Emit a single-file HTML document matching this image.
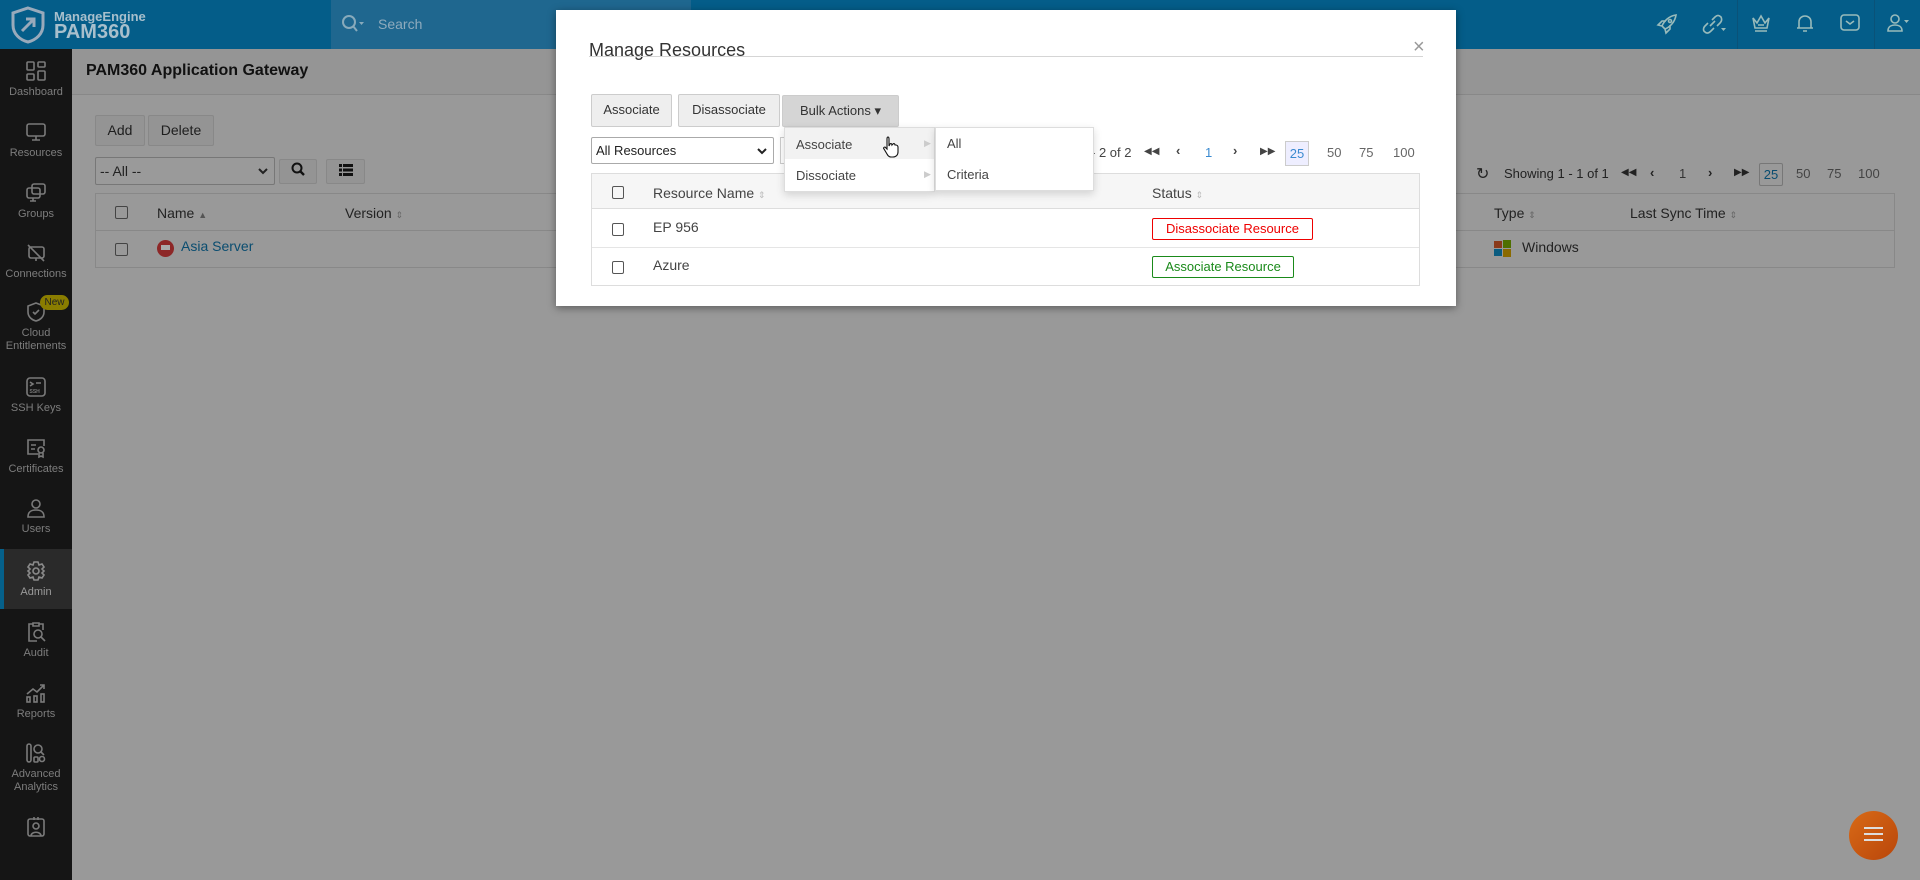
<!DOCTYPE html>
<html><head><meta charset="utf-8"><style>
*{box-sizing:border-box;margin:0;padding:0}
body{width:1920px;height:880px;overflow:hidden;background:#999;font-family:"Liberation Sans",sans-serif;font-size:14px;color:#1a1a1a;position:relative}
.a{position:absolute}
.hdr{left:0;top:0;width:1920px;height:49px;background:#045d89}
.srch{left:331px;top:0;width:360px;height:49px;background:#1f678f}
.side{left:0;top:49px;width:72px;height:831px;background:#151515}
.si{position:absolute;left:0;width:72px;text-align:center;color:#7d7d7d;font-size:11px;line-height:13px}
.si svg{display:block;margin:0 auto 4px}
.btn{position:absolute;border:1px solid #888;background:#949494;border-radius:2px;text-align:center;line-height:28px;color:#1e1e1e}
.cb{position:absolute;width:13px;height:13px;border:1px solid #444;border-radius:2px}
.modal{left:556px;top:10px;width:900px;height:296px;background:#fff;box-shadow:0 2px 8px rgba(0,0,0,.4)}
.m{position:absolute}
.mb{position:absolute;border:1px solid #ccc;background:#eee;border-radius:2px;text-align:center;line-height:30px;color:#333;font-size:13px}
.pg{position:absolute;font-size:13px;color:#666}
</style></head><body>
<div class="a hdr"></div>
<div class="a srch"></div>
<svg class="a" style="left:10px;top:6px" width="36" height="38" viewBox="0 0 36 38"><path d="M18 2 L33 7 V19 C33 28 26 34 18 36 C10 34 3 28 3 19 V7 Z" fill="none" stroke="#9ab" stroke-width="3"/><path d="M12 25 L24 13 M16 13 H24 V21" fill="none" stroke="#9ab" stroke-width="3"/></svg>
<div class="a" style="left:54px;top:9px;color:#a8bfcc;font-size:13px;font-weight:bold">ManageEngine</div>
<div class="a" style="left:54px;top:21px;color:#a8bfcc;font-size:20px;font-weight:bold">PAM360</div>
<svg class="a" style="left:341px;top:13px" width="24" height="22" viewBox="0 0 24 22"><circle cx="8" cy="9" r="6" fill="none" stroke="#8ab" stroke-width="2"/><path d="M12 13 L16 18" stroke="#8ab" stroke-width="2"/><path d="M18 9 h5 l-2.5 3z" fill="#8ab"/></svg>
<div class="a" style="left:378px;top:16px;color:#8fabbd;font-size:14px">Search</div>
<svg class="a" style="left:1656px;top:13px" width="22" height="22" viewBox="0 0 22 22" fill="none" stroke="#9bb" stroke-width="1.6"><path d="M20 2 C13 3 8 8 6 13 L9 16 C14 14 19 9 20 2Z M6 13 L2 12 L6 8 H10 M9 16 L10 20 L14 16 V12"/><circle cx="14" cy="8" r="1.5"/></svg>
<svg class="a" style="left:1701px;top:13px" width="26" height="22" viewBox="0 0 26 22" fill="none" stroke="#9bb" stroke-width="1.6"><path d="M9 13 L14 8 M7 10 L4 13 C2 15 2 18 4 19 C6 21 8 20 10 18 L13 15 M11 7 L14 4 C16 2 18 2 20 4 C21 6 21 8 19 10 L16 13"/><path d="M20 15 h5 l-2.5 3z" fill="#9bb" stroke="none"/></svg>
<div class="a" style="left:1737px;top:0;width:1px;height:49px;background:#0a5278"></div>
<svg class="a" style="left:1750px;top:12px" width="22" height="22" viewBox="0 0 22 22" fill="none" stroke="#9bb" stroke-width="1.6"><path d="M3 6 L7 11 L11 4 L15 11 L19 6 L17 16 H5 Z M5 19 H17 M8 13 H14"/></svg>
<svg class="a" style="left:1794px;top:12px" width="22" height="22" viewBox="0 0 22 22" fill="none" stroke="#9bb" stroke-width="1.6"><path d="M5 16 V10 C5 6 8 4 11 4 C14 4 17 6 17 10 V16 H5 Z M3 16 H19 M9 19 H13"/></svg>
<svg class="a" style="left:1839px;top:13px" width="22" height="20" viewBox="0 0 22 20" fill="none" stroke="#9bb" stroke-width="1.6"><rect x="2" y="2" width="18" height="15" rx="3"/><path d="M7 8 L11 11 L15 8"/></svg>
<div class="a" style="left:1874px;top:0;width:1px;height:49px;background:#0a5278"></div>
<svg class="a" style="left:1885px;top:12px" width="26" height="22" viewBox="0 0 26 22" fill="none" stroke="#9bb" stroke-width="1.6"><circle cx="10" cy="7" r="4"/><path d="M3 19 C3 14 7 13 10 13 C13 13 17 14 17 19 Z"/><path d="M19 8 h5 l-2.5 3z" fill="#9bb" stroke="none"/></svg>

<div class="a side"></div>
<div class="a" style="left:0;top:549px;width:72px;height:60px;background:#2a2a2a"></div>
<div class="a" style="left:0;top:549px;width:4px;height:60px;background:#05608a"></div>
<div class="si" style="top:60px"><svg width="22" height="22" viewBox="0 0 22 22" fill="none" stroke="#7a7a7a" stroke-width="1.6"><rect x="2" y="2" width="7" height="8" rx="1"/><rect x="13" y="2" width="7" height="5" rx="1"/><rect x="2" y="14" width="7" height="6" rx="1"/><rect x="13" y="11" width="7" height="9" rx="1"/></svg>Dashboard</div>
<div class="si" style="top:121px"><svg width="22" height="22" viewBox="0 0 22 22" fill="none" stroke="#7a7a7a" stroke-width="1.6"><rect x="2" y="3" width="18" height="12" rx="2"/><path d="M11 15 V19 M7 19 H15"/></svg>Resources</div>
<div class="si" style="top:182px"><svg width="22" height="22" viewBox="0 0 22 22" fill="none" stroke="#7a7a7a" stroke-width="1.6"><rect x="7" y="2" width="13" height="10" rx="2"/><rect x="2" y="6" width="13" height="10" rx="2"/><path d="M8 16 V19 M5 19 H11"/></svg>Groups</div>
<div class="si" style="top:242px"><svg width="22" height="22" viewBox="0 0 22 22" fill="none" stroke="#7a7a7a" stroke-width="1.6"><rect x="4" y="5" width="15" height="11" rx="2"/><path d="M3 3 L19 19 M11 16 V19"/></svg>Connections</div>
<div class="si" style="top:301px"><svg width="22" height="22" viewBox="0 0 22 22" fill="none" stroke="#7a7a7a" stroke-width="1.6"><path d="M11 2 L19 5 V11 C19 16 15 19 11 20 C7 19 3 16 3 11 V5 Z M8 11 L10 13 L14 9"/></svg>Cloud<br>Entitlements</div>
<div class="a" style="left:40px;top:295px;width:29px;height:15px;border-radius:8px;background:#8a7d00;color:#222;font-size:10px;text-align:center;line-height:15px">New</div>
<div class="si" style="top:376px"><svg width="22" height="22" viewBox="0 0 22 22" fill="none" stroke="#7a7a7a" stroke-width="1.6"><rect x="2" y="2" width="18" height="18" rx="3"/><path d="M5 6 L8 8 L5 10 M11 7 H16"/><text x="4.5" y="17" font-size="5" fill="#7a7a7a" stroke="none" font-family="Liberation Sans" font-weight="bold">SSH</text></svg>SSH Keys</div>
<div class="si" style="top:437px"><svg width="22" height="22" viewBox="0 0 22 22" fill="none" stroke="#7a7a7a" stroke-width="1.6"><path d="M13 17 H3 V3 H19 V9 M6 8 H11 M6 12 H10"/><circle cx="16" cy="13" r="3"/><path d="M14 16 V20 L16 19 L18 20 V16"/></svg>Certificates</div>
<div class="si" style="top:497px"><svg width="22" height="22" viewBox="0 0 22 22" fill="none" stroke="#7a7a7a" stroke-width="1.6"><circle cx="11" cy="7" r="4"/><path d="M3 20 C3 14 7 13 11 13 C15 13 19 14 19 20 Z"/></svg>Users</div>
<div class="si" style="top:560px;color:#9a9a9a"><svg width="22" height="22" viewBox="0 0 22 22" fill="none" stroke="#8a8a8a" stroke-width="1.6"><circle cx="11" cy="11" r="3"/><path d="M9 2 H13 L14 5 L17 4 L19 7 L17 9 L19 11 L17 13 L19 15 L17 18 L14 17 L13 20 H9 L8 17 L5 18 L3 15 L5 13 L3 11 L5 9 L3 7 L5 4 L8 5 Z"/></svg>Admin</div>
<div class="si" style="top:621px"><svg width="22" height="22" viewBox="0 0 22 22" fill="none" stroke="#7a7a7a" stroke-width="1.6"><path d="M8 3 H4 V20 H12 M14 3 H18 V9 M8 2 H14 V5 H8 Z"/><circle cx="13" cy="13" r="4"/><path d="M16 16 L20 20"/></svg>Audit</div>
<div class="si" style="top:682px"><svg width="22" height="22" viewBox="0 0 22 22" fill="none" stroke="#7a7a7a" stroke-width="1.6"><path d="M2 12 L8 7 L12 10 L19 3 M15 3 H19 V7"/><rect x="2" y="15" width="3" height="5"/><rect x="9" y="14" width="3" height="6"/><rect x="16" y="12" width="3" height="8"/></svg>Reports</div>
<div class="si" style="top:742px"><svg width="22" height="22" viewBox="0 0 22 22" fill="none" stroke="#7a7a7a" stroke-width="1.6"><rect x="2" y="2" width="4" height="18" rx="2"/><circle cx="13" cy="7" r="4"/><path d="M16 10 L19 13"/><rect x="9" y="15" width="4" height="5" rx="1"/><circle cx="17" cy="17" r="2.5"/></svg>Advanced<br>Analytics</div>
<div class="si" style="top:816px"><svg width="22" height="22" viewBox="0 0 22 22" fill="none" stroke="#7a7a7a" stroke-width="1.6"><rect x="3" y="3" width="16" height="17" rx="2"/><circle cx="11" cy="10" r="3"/><path d="M6 20 C6 15 16 15 16 20 M9 1 V4 M13 1 V4"/></svg></div>

<div class="a" style="left:72px;top:49px;width:1848px;height:46px;background:#959595;border-bottom:1px solid #888"></div>
<div class="a" style="left:86px;top:62px;font-size:16px;font-weight:bold;color:#111">PAM360 Application Gateway</div>
<div class="btn" style="left:95px;top:115px;width:50px;height:31px">Add</div>
<div class="btn" style="left:148px;top:115px;width:66px;height:31px">Delete</div>
<div class="a" style="left:95px;top:157px;width:180px;height:28px;border:1px solid #777;border-radius:2px;background:#9a9a9a;line-height:26px;padding-left:4px;color:#222">-- All --<svg style="position:absolute;right:6px;top:10px" width="10" height="7" viewBox="0 0 10 7"><path d="M1 1 L5 5 L9 1" fill="none" stroke="#222" stroke-width="2"/></svg></div>
<div class="btn" style="left:279px;top:159px;width:38px;height:25px;line-height:23px"><svg width="14" height="14" viewBox="0 0 14 14"><circle cx="6" cy="6" r="4.5" fill="none" stroke="#111" stroke-width="2"/><path d="M9 9 L13 13" stroke="#111" stroke-width="2.4"/></svg></div>
<div class="btn" style="left:326px;top:159px;width:39px;height:25px;line-height:23px"><svg width="14" height="12" viewBox="0 0 14 12" fill="#111"><rect x="0" y="0" width="3" height="3"/><rect x="4" y="0" width="10" height="3"/><rect x="0" y="4.5" width="3" height="3"/><rect x="4" y="4.5" width="10" height="3"/><rect x="0" y="9" width="3" height="3"/><rect x="4" y="9" width="10" height="3"/></svg></div>
<div class="a" style="left:1476px;top:164px;font-size:16px;color:#222">&#8635;</div>
<div class="a" style="left:1504px;top:166px;color:#222;font-size:13px">Showing 1 - 1 of 1</div>
<div class="a" style="left:1621px;top:167px;color:#222;font-size:10px">&#9664;&#9664;</div>
<div class="pg" style="left:1650px;top:165px;color:#222;font-weight:bold">&lsaquo;</div>
<div class="pg" style="left:1679px;top:166px;color:#333">1</div>
<div class="pg" style="left:1708px;top:165px;color:#222;font-weight:bold">&rsaquo;</div>
<div class="a" style="left:1734px;top:167px;color:#222;font-size:10px">&#9654;&#9654;</div>
<div class="a" style="left:1759px;top:163px;width:24px;height:23px;border:1px solid #777;border-radius:2px;text-align:center;line-height:21px;color:#0a4d70;font-size:13px">25</div>
<div class="pg" style="left:1796px;top:166px;color:#444">50</div>
<div class="pg" style="left:1827px;top:166px;color:#444">75</div>
<div class="pg" style="left:1858px;top:166px;color:#444">100</div>
<div class="a" style="left:95px;top:193px;width:1800px;height:75px;border:1px solid #888"></div>
<div class="a" style="left:95px;top:230px;width:1800px;height:1px;background:#888"></div>
<div class="cb" style="left:115px;top:206px"></div>
<div class="cb" style="left:115px;top:243px"></div>
<div class="a" style="left:157px;top:205px;color:#222">Name <span style="color:#555;font-size:9px">&#9650;</span></div>
<div class="a" style="left:345px;top:205px;color:#222">Version <span style="color:#666;font-size:9px">&#8661;</span></div>
<div class="a" style="left:1494px;top:205px;color:#222">Type <span style="color:#666;font-size:9px">&#8661;</span></div>
<div class="a" style="left:1630px;top:205px;color:#222">Last Sync Time <span style="color:#666;font-size:9px">&#8661;</span></div>
<div class="a" style="left:157px;top:240px;width:17px;height:17px;border-radius:50%;background:#8d2727"></div>
<div class="a" style="left:161px;top:245px;width:9px;height:5px;background:#aaa"></div>
<div class="a" style="left:181px;top:238px;color:#0a4d70">Asia Server</div>
<svg class="a" style="left:1494px;top:240px" width="17" height="17" viewBox="0 0 17 17"><rect x="0" y="1" width="8" height="7" fill="#8a3a1a"/><rect x="9" y="0" width="8" height="8" fill="#4f6f00"/><rect x="0" y="9" width="8" height="7" fill="#0a5c80"/><rect x="9" y="9" width="8" height="8" fill="#8a6a00"/></svg>
<div class="a" style="left:1522px;top:239px;color:#222">Windows</div>
<div class="a" style="left:1849px;top:811px;width:49px;height:49px;border-radius:50%;background:linear-gradient(135deg,#d86a17,#b9460a)"></div>
<div class="a" style="left:1864px;top:827px;width:19px;height:2px;background:#ddd;box-shadow:0 6px 0 #ddd,0 12px 0 #ddd"></div>

<div class="a modal">
<div class="m" style="left:33px;top:30px;font-size:18px;color:#333">Manage Resources</div>
<div class="m" style="left:857px;top:26px;font-size:20px;color:#999">&times;</div>
<div class="m" style="left:33px;top:46px;width:834px;height:1px;background:#d5d5d5"></div>
<div class="mb" style="left:35px;top:84px;width:81px;height:33px">Associate</div>
<div class="mb" style="left:122px;top:84px;width:102px;height:33px">Disassociate</div>
<div class="mb" style="left:226px;top:85px;width:117px;height:32px;background:#d5d5d5;border-color:#ccc">Bulk Actions &#9662;</div>
<div class="m" style="left:35px;top:127px;width:183px;height:27px;border:1px solid #aaa;border-radius:2px;font-size:13px;line-height:25px;padding-left:4px;color:#222">All Resources<svg style="position:absolute;right:6px;top:10px" width="10" height="7" viewBox="0 0 10 7"><path d="M1 1 L5 5 L9 1" fill="none" stroke="#222" stroke-width="2"/></svg></div>
<div class="m" style="left:224px;top:127px;width:10px;height:27px;border:1px solid #ccc;border-right:none"></div>
<div class="m" style="left:535px;top:135px;font-size:13px;color:#444">- 2 of 2</div>
<div class="pg" style="left:588px;top:136px;color:#444;font-size:10px">&#9664;&#9664;</div>
<div class="pg" style="left:620px;top:133px;color:#444;font-weight:bold">&lsaquo;</div>
<div class="pg" style="left:649px;top:135px;color:#3a8ad0">1</div>
<div class="pg" style="left:677px;top:133px;color:#444;font-weight:bold">&rsaquo;</div>
<div class="pg" style="left:704px;top:136px;color:#444;font-size:10px">&#9654;&#9654;</div>
<div class="m" style="left:729px;top:131px;width:24px;height:25px;border:1px solid #ccc;background:#eef;text-align:center;line-height:23px;color:#3a8ad0;font-size:13px">25</div>
<div class="pg" style="left:771px;top:135px">50</div>
<div class="pg" style="left:803px;top:135px">75</div>
<div class="pg" style="left:837px;top:135px">100</div>
<div class="m" style="left:35px;top:163px;width:829px;height:113px;border:1px solid #ddd"></div>
<div class="m" style="left:36px;top:164px;width:827px;height:35px;background:#f6f6f6;border-bottom:1px solid #ddd"></div>
<div class="m" style="left:36px;top:237px;width:827px;height:1px;background:#e5e5e5"></div>
<div class="cb" style="left:56px;top:176px;border-color:#555;width:12px;height:13px"></div>
<div class="cb" style="left:56px;top:213px;border-color:#555;width:12px;height:13px"></div>
<div class="cb" style="left:56px;top:251px;border-color:#555;width:12px;height:13px"></div>
<div class="m" style="left:97px;top:175px;color:#444;font-size:14px">Resource Name <span style="color:#bbb;font-size:9px">&#8661;</span></div>
<div class="m" style="left:596px;top:175px;color:#444;font-size:14px">Status <span style="color:#bbb;font-size:9px">&#8661;</span></div>
<div class="m" style="left:97px;top:209px;color:#444">EP 956</div>
<div class="m" style="left:97px;top:247px;color:#444">Azure</div>
<div class="m" style="left:596px;top:208px;width:161px;height:22px;border:1px solid #e00;border-radius:2px;color:#e00;font-size:13px;text-align:center;line-height:20px">Disassociate Resource</div>
<div class="m" style="left:596px;top:246px;width:142px;height:22px;border:1px solid #1a8a1a;border-radius:2px;color:#1a8a1a;font-size:13px;text-align:center;line-height:20px">Associate Resource</div>
<div class="m" style="left:228px;top:117px;width:151px;height:65px;background:#fff;border:1px solid #ddd;box-shadow:0 3px 8px rgba(0,0,0,.15)"></div>
<div class="m" style="left:229px;top:118px;width:149px;height:31px;background:#f2f2f2"></div>
<div class="m" style="left:240px;top:127px;font-size:13px;color:#444">Associate</div>
<div class="m" style="left:240px;top:158px;font-size:13px;color:#444">Dissociate</div>
<div class="m" style="left:368px;top:128px;font-size:9px;color:#ccc">&#9654;</div>
<div class="m" style="left:368px;top:159px;font-size:9px;color:#ccc">&#9654;</div>
<svg class="m" style="left:327px;top:126px" width="16" height="22" viewBox="0 0 16 22"><path d="M5 1 C6 1 6 2 6 3 V10 L7 8 C8 7 9 8 9 9 L10 8 C11 7 12 8 12 9 L13 9 C14 9 15 10 15 11 V16 C15 19 13 21 10 21 H8 C6 21 5 20 4 18 L1 13 C0 12 1 11 2 11 L4 13 V3 C4 2 4 1 5 1Z" fill="#fff" stroke="#111" stroke-width="1.1"/></svg>
<div class="m" style="left:379px;top:117px;width:159px;height:64px;background:#fff;border:1px solid #ddd;box-shadow:0 3px 8px rgba(0,0,0,.15)"></div>
<div class="m" style="left:391px;top:126px;font-size:13px;color:#444">All</div>
<div class="m" style="left:391px;top:157px;font-size:13px;color:#444">Criteria</div>
</div>
</body></html>
